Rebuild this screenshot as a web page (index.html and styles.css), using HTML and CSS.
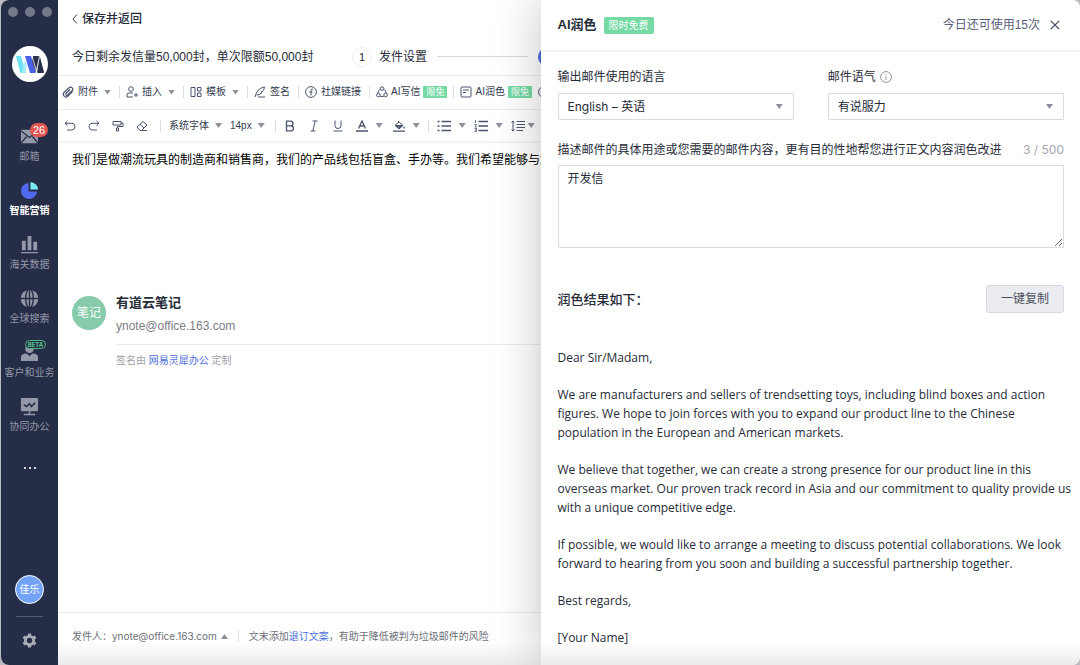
FILE: index.html
```html
<!DOCTYPE html>
<html lang="zh-CN">
<head>
<meta charset="utf-8">
<meta name="viewport" content="width=device-width, initial-scale=1">
<title>AI润色</title>
<link rel="stylesheet" href="styles.css">
</head>
<body>
<div class="window">
  <nav class="sidebar">
    <div class="lights"><i></i><i></i><i></i></div>
    <svg class="logo" viewBox="0 0 36 36"><circle cx="18" cy="18" r="18" fill="#fff"/><path d="M4 10h5l5 17h-5q-1 0-1-1z" fill="#6fe3f3"/><path d="M13 14l2 6-2 7h-3z" fill="#a9eef8"/><path d="M13 10h6l5 17h-6z" fill="#4a62e8"/><path d="M21 10h7l-4 17-4-12z" fill="#27304d"/><path d="M28 11l4 15q0 1-1 1h-6l2-13z" fill="#27304d"/><path d="M27.500 10l-3.500 17M20 10l5 17" stroke="#fff" stroke-width=".8"/></svg>
    <ul class="nav">
      <li><a href="#"><svg viewBox="0 0 20 20"><path fill="#9498a8" d="M1 4l9 7 9-7v13H1z"/><path fill="#9498a8" d="M1 3h18v2l-9 7-9-7z"/><path d="M1 4l9 7 9-7M1 17l6-7M19 17l-6-7" fill="none" stroke="#262d47" stroke-width="1.400"/></svg><span>邮箱</span><b class="count">26</b></a></li>
      <li><a href="#" class="active"><svg viewBox="0 0 20 20"><path fill="#4f69f0" d="M9 2a8.500 8.500 0 1 0 9 9H9z"/><path fill="#7de8f5" d="M11 1a8.500 8.500 0 0 1 8 8h-8z"/></svg><span>智能营销</span></a></li>
      <li><a href="#"><svg viewBox="0 0 20 20" fill="#9498a8"><path d="M2 6h4v10H2zM8 1h4v15H8zM14 7h4v9h-4zM1 18h18v1.300H1z"/></svg><span>海关数据</span></a></li>
      <li><a href="#"><svg viewBox="0 0 20 20"><circle cx="10" cy="10" r="9.300" fill="#9498a8"/><g fill="none" stroke="#262d47" stroke-width="1.500"><ellipse cx="10" cy="10" rx="4" ry="10"/><path d="M0 10h20M10 0v20"/></g></svg><span>全球搜索</span></a></li>
      <li><a href="#"><svg viewBox="0 0 20 20" fill="#9498a8"><circle cx="10" cy="6" r="4.500"/><path d="M1 19v-4q0-4 6-4l3 3 3-3q6 0 6 4v4z"/></svg><span>客户和业务</span><b class="beta">BETA</b></a></li>
      <li><a href="#"><svg viewBox="0 0 20 20"><rect x="1" y="1" width="18" height="14" rx="1" fill="#9498a8"/><path d="M10 15v3M4 18.500h12" stroke="#9498a8" stroke-width="1.500"/><path d="M4 8l3 2 3-3 2 3 4-4" fill="none" stroke="#262d47" stroke-width="1.600"/></svg><span>协同办公</span></a></li>
    </ul>
    <button class="dots" aria-label="更多"><i></i><i></i><i></i></button>
    <div class="side-foot">
      <div class="me">佳乐</div>
      <hr>
      <button class="gear" aria-label="设置"><svg viewBox="0 0 16 16"><circle cx="8" cy="8" r="4.400" fill="none" stroke="#a9acb8" stroke-width="3"/><path d="M8 .5v3M8 12.500v3M1.500 4.200l2.600 1.500M11.900 10.300l2.600 1.500M1.500 11.800l2.600-1.500M11.900 5.700l2.600-1.500" stroke="#a9acb8" stroke-width="3.400"/></svg></button>
    </div>
  </nav>

  <main class="main">
    <header class="top">
      <button class="back"><svg viewBox="0 0 6 10"><path d="M5 .5L1 5l4 4.500" fill="none" stroke="#333b50"/></svg>保存并返回</button>
    </header>
    <div class="steps">
      <p class="quota">今日剩余发信量50,000封，单次限额50,000封</p>
      <span class="num">1</span><span class="step-name">发件设置</span><i class="line"></i><span class="num current">2</span>
    </div>
    <div class="bar">
      <button><svg viewBox="0 0 12 12"><path d="M10.500 5.500L6 10Q4 12 2.200 10.200T2 6.500L7 1.800q1.800-1.400 3.200 0t0 3L5.600 9Q4.600 9.800 4 9t.200-1.800L8 3.500" stroke-width="1.200"/></svg>附件<i class="tri"></i></button><i class="sep"></i>
      <button><svg viewBox="0 0 12 12"><circle cx="5" cy="3" r="2.300"/><path d="M7 11H1V9q0-2 2-2h4M10 7v4M8 9h4"/></svg>插入<i class="tri"></i></button><i class="sep"></i>
      <button><svg viewBox="0 0 12 12"><path d="M1 1.500h4v9H1zM7.500 1.500H11v3.500H7.500zM7.500 7H11v3.500H7.500z"/></svg>模板<i class="tri"></i></button><i class="sep"></i>
      <button><svg viewBox="0 0 12 12"><path d="M1 11Q3 2 10.500 1q-.5 3-2 4.500L7 6l1 .5Q6 9 2.500 9M4 11h7"/></svg>签名</button><i class="sep"></i>
      <button><svg viewBox="0 0 12 12"><circle cx="6" cy="6" r="5.400"/><path d="M8 3.200q-2-.7-2 1.300V9.500M4.300 6h3.200"/></svg>社媒链接</button><i class="sep"></i>
      <button class="ai"><svg viewBox="0 0 12 12"><circle cx="6" cy="2.600" r="1.800"/><circle cx="2.400" cy="9" r="1.800"/><circle cx="9.600" cy="9" r="1.800"/><path d="M4.200 3.200Q1.800 4.800 1.800 7.200M7.800 3.200q2.400 1.600 2.400 4M4 10.200q2 1 4 0"/></svg>AI写信<em>限免</em></button><i class="sep"></i>
      <button class="ai"><svg viewBox="0 0 12 12"><rect x="1" y="1" width="10" height="10" rx="1"/><path d="M3 4h6M3 6.500h3"/></svg>AI润色<em>限免</em></button>
      <button aria-label="更多"><svg viewBox="0 0 12 12"><circle cx="6" cy="6" r="5.400"/></svg></button>
    </div>
    <div class="bar format">
      <div class="group wide">
        <button aria-label="撤销"><svg viewBox="0 0 12 12"><path d="M3.500 1L1 3.300l2.500 2.300M1 3.300h7q3 .2 3 3.300T8 10H3"/></svg></button>
        <button aria-label="重做"><svg viewBox="0 0 12 12"><path d="M8.500 1L11 3.300 8.500 5.600M11 3.300H4Q1 3.500 1 6.600T4 10h5"/></svg></button>
        <button aria-label="格式刷"><svg viewBox="0 0 12 12"><path d="M1 1.500h8V5H1zM9 3h2v3.500H5.500V8M4.500 8h2v3h-2z"/></svg></button>
        <button aria-label="清除格式"><svg viewBox="0 0 12 12"><path d="M1 7l6-5.500L11 5 5.500 10.500H4zM4 4.300l4 3.700M4 10.500h7"/></svg></button>
      </div><i class="sep"></i>
      <div class="group text"><button>系统字体<i class="tri"></i></button><button>14px<i class="tri"></i></button></div><i class="sep"></i>
      <div class="group wide">
        <button aria-label="加粗"><svg viewBox="0 0 12 12"><path d="M2.500 1.200H6.500q2.500 0 2.500 2.300T6.500 5.800h-4zM2.500 5.800H7q2.500 0 2.500 2.500T7 10.800H2.500z" stroke-width="1.300"/></svg></button>
        <button aria-label="斜体"><svg viewBox="0 0 12 12"><path d="M4.500 1h5M2.500 11h5M7.200 1L4.800 11"/></svg></button>
        <button aria-label="下划线"><svg viewBox="0 0 12 12"><path d="M3 .5v5q0 3 3 3t3-3v-5M1.500 11h9"/></svg></button>
        <button aria-label="文字颜色"><svg viewBox="0 0 12 12"><path d="M2.500 8.500L6 1l3.500 7.500M3.700 6h4.600M0 11h12" stroke-width="1.300"/></svg><i class="tri"></i></button>
        <button aria-label="背景颜色"><svg viewBox="0 0 12 12"><path d="M5 1l5 4.500-4 3.500L2 5.500 6 2"/><path d="M2.500 5.500h7L6 8.600z" fill="#59617a"/><path d="M11 6.500v2M0 11.200h12" stroke-width="1.300"/></svg><i class="tri"></i></button>
      </div><i class="sep"></i>
      <div class="group">
        <button aria-label="无序列表"><svg class="w14" viewBox="0 0 14 12"><path d="M4.500 1.500H14M4.500 6H14M4.500 10.500H14M.5 1.500h2M.5 6h2M.5 10.500h2" stroke-width="1.400"/></svg><i class="tri"></i></button>
        <button aria-label="有序列表"><svg class="w14" viewBox="0 0 14 12"><path d="M4.500 1.500H14M4.500 6H14M4.500 10.500H14" stroke-width="1.400"/><path d="M1.500 0v3M.5 4.500h2L1 7h2M.5 8.500h2v3h-2M1 10h1.500" stroke-width=".8"/></svg><i class="tri"></i></button>
        <button class="tight" aria-label="行高"><svg class="w14" viewBox="0 0 14 12"><path d="M2 1v10M.5 2.500L2 1l1.500 1.500M.5 9.500L2 11l1.500-1.500M5.500 1.500H14M5.500 4.500H14M5.500 7.500H14M5.500 10.500H12"/></svg><i class="tri"></i></button>
      </div>
    </div>
    <article class="mail">
      <p>我们是做潮流玩具的制造商和销售商，我们的产品线包括盲盒、手办等。我们希望能够与您</p>
      <section class="sign">
        <div class="avatar">笔记</div>
        <div class="sign-body">
          <h2>有道云笔记</h2>
          <p class="addr">ynote@office.163.com</p>
          <p class="made">签名由 <a href="#">网易灵犀办公</a> 定制</p>
        </div>
      </section>
    </article>
    <footer class="foot"><span>发件人：</span><button>ynote@office.163.com<i class="tri up"></i></button><i class="sep"></i><span>文末添加<a href="#">退订文案</a>，有助于降低被判为垃圾邮件的风险</span></footer>
  </main>

  <aside class="drawer">
    <header class="drawer-head">
      <h1>AI润色</h1><span class="free">限时免费</span>
      <span class="left">今日还可使用15次</span>
      <button class="close" aria-label="关闭"><svg viewBox="0 0 10 10"><path d="M.8.8l8.400 8.400M9.200.8L.8 9.200" stroke="#3c4664" stroke-width="1.200"/></svg></button>
    </header>
    <form class="form">
      <div class="pair">
        <div class="field"><label for="lang">输出邮件使用的语言</label><div class="pick"><select id="lang"><option>English – 英语</option></select><i class="tri"></i></div></div>
        <div class="field"><label for="tone">邮件语气 <svg class="info" viewBox="0 0 12 12"><circle cx="6" cy="6" r="5.400"/><path d="M6 5.200V9M6 3v1"/></svg></label><div class="pick"><select id="tone"><option>有说服力</option></select><i class="tri"></i></div></div>
      </div>
      <div class="desc"><label for="use">描述邮件的具体用途或您需要的邮件内容，更有目的性地帮您进行正文内容润色改进</label><span>3 / 500</span></div>
      <textarea id="use">开发信</textarea>
      <div class="result"><h2>润色结果如下：</h2><button type="button" class="copy">一键复制</button></div>
      <div class="letter">
        <p>Dear Sir/Madam,</p>
        <p>We are manufacturers and sellers of trendsetting toys, including blind boxes and action figures. We hope to join forces with you to expand our product line to the Chinese population in the European and American markets.</p>
        <p>We believe that together, we can create a strong presence for our product line in this overseas market. Our proven track record in Asia and our commitment to quality provide us with a unique competitive edge.</p>
        <p>If possible, we would like to arrange a meeting to discuss potential collaborations. We look forward to hearing from you soon and building a successful partnership together.</p>
        <p>Best regards,</p>
        <p>[Your Name]</p>
      </div>
    </form>
  </aside>
</div>
</body>
</html>
```

FILE: styles.css
```css
* { box-sizing: border-box; }
body { margin: 0; background: #b9bbc0; font-family: "Liberation Sans", "Noto Sans CJK SC", sans-serif; font-size: 12px; line-height: 18px; color: #262b38; }
h1, h2, p, ul { margin: 0; padding: 0; }
ul { list-style: none; }
i, em { font-style: normal; }
a { color: #4c6fe0; text-decoration: none; }
button { font: inherit; color: inherit; background: none; border: 0; padding: 0; display: flex; align-items: center; flex: none; }
svg { display: block; flex: none; }

.window { position: relative; display: flex; height: 100vh; margin-left: 1px; border-radius: 8px; overflow: hidden; background: #fff; }
.window::after { content: ""; position: absolute; left: 57px; right: 0; bottom: 0; height: 24px; background: linear-gradient(rgba(0,0,0,0), rgba(0,0,0,.08)); pointer-events: none; }

.sidebar { width: 57px; flex: none; background: #262d47; color: #9498a8; font-size: 10px; display: flex; flex-direction: column; align-items: center; }
.lights { display: flex; gap: 7px; padding-top: 7px; }
.lights i { width: 10px; height: 10px; border-radius: 50%; background: #747989; }
.logo { width: 36px; height: 36px; margin-top: 29px; }
.nav { width: 100%; margin-top: 43px; }
.nav li { height: 54px; }
.nav a { position: relative; display: flex; flex-direction: column; align-items: center; color: inherit; line-height: 14px; padding-top: 2px; gap: 4px; white-space: nowrap; }
.nav svg { width: 19px; height: 19px; }
.nav .active { color: #fff; font-weight: 700; }
.count { position: absolute; left: 29px; top: -2px; padding: 0 3px; border-radius: 7px; background: #e25550; color: #fff; font-size: 11px; font-weight: 400; line-height: 14px; }
.beta { position: absolute; left: 24px; top: -1px; width: 21px; border: 1px solid #4fb584; border-radius: 5px; background: #262d47; color: #54c58c; font-family: Inter, sans-serif; font-size: 6px; line-height: 7px; text-align: center; }
.dots { gap: 3px; margin-top: 15px; height: 8px; }
.dots i { width: 2px; height: 2px; background: #d5d7de; }
.side-foot { margin-top: auto; display: flex; flex-direction: column; align-items: center; padding-bottom: 17px; }
.me { width: 29px; height: 29px; border: 1px solid #fff; border-radius: 50%; background: #73a2f7; color: #fff; line-height: 27px; text-align: center; }
.side-foot hr { width: 27px; border: 0; border-top: 1px solid #555c70; margin: 12px 0 16px; }
.gear svg { width: 15px; height: 15px; }

.main { flex: 1; min-width: 0; display: flex; flex-direction: column; overflow: hidden; white-space: nowrap; }
.top { display: flex; align-items: center; height: 38px; padding-left: 14px; }
.back { gap: 4px; font-weight: 500; }
.back svg { width: 6px; height: 10px; }
.steps { display: flex; align-items: center; height: 38px; padding-left: 14px; border-bottom: 1px solid #ebecee; }
.quota { width: 280px; flex: none; }
.num { width: 20px; height: 20px; flex: none; border: 1px solid #eeeff2; border-radius: 50%; line-height: 18px; text-align: center; font-size: 11px; }
.num.current { background: #4c6fe0; border-color: #4c6fe0; color: #fff; }
.step-name { margin: 0 10px 0 7px; }
.line { width: 91px; height: 1px; background: #d6d9e0; margin-right: 10px; }

.bar { display: flex; align-items: center; flex: none; height: 34px; padding: 0 0 1px 4px; border-bottom: 1px solid #ebecee; font-size: 10px; color: #333b50; }
.bar > button { gap: 4px; padding-right: 8px; }
.bar > .sep + button { padding-left: 6px; }
.bar > .ai { gap: 3px; padding-right: 6px; }
.bar svg { width: 12px; height: 12px; fill: none; stroke: #4b546e; stroke-width: 1; }
.bar svg.w14 { width: 14px; }
.bar em { padding: 0 3px; border-radius: 1px; background: #74d9a3; color: #fff; font-size: 9px; line-height: 12px; }
.sep { width: 1px; height: 12px; flex: none; background: #dcdee3; }
.tri { width: 7px; height: 5px; flex: none; background: #8d919b; clip-path: polygon(0 0, 100% 0, 50% 100%); }
.up { transform: rotate(180deg); }
.bar > button .tri { margin: 0 0 0 2px; }
.format { padding: 0 0 0 6px; height: 33px; border-bottom: 2px solid #f4f4f5; }
.group { display: flex; align-items: center; gap: 8px; }
.group button { gap: 8px; }
.text button { gap: 6px; }
.group .tight { gap: 3px; }
.format .sep { margin: 0 8px 0 10px; }
.format .wide:first-child + .sep { margin-left: 12px; }
.wide { gap: 12px; }
.wide .tri { margin-right: -2px; }

.mail { flex: 1; min-height: 0; padding: 8px 0 0 14px; color: #000; }
.sign { display: flex; gap: 10px; margin-top: 123px; }
.avatar { width: 34px; height: 34px; margin-top: 4px; flex: none; border-radius: 50%; background: #86cbaa; color: #fff; line-height: 34px; text-align: center; }
.sign-body { flex: 1; color: #262b38; }
.sign h2 { font-size: 13px; line-height: 22px; margin-bottom: 3px; font-weight: 700; }
.addr { color: #7b7d84; padding-bottom: 9px; border-bottom: 1px solid #ebecee; }
.made { font-size: 10px; color: #a0a2a8; padding-top: 7px; }
.foot { display: flex; align-items: center; height: 53px; padding: 0 0 6px 14px; border-top: 1px solid #ebecee; font-family: Inter, "Noto Sans CJK SC", sans-serif; font-size: 10px; color: #6d7078; }
.foot button { gap: 4px; }
.foot .sep { margin: 0 10px; }

.drawer { position: absolute; top: 0; right: 0; bottom: 0; width: 50%; background: #fff; overflow: hidden auto; scrollbar-width: none; box-shadow: 0 0 46px rgba(0,0,0,.24); }
.drawer-head { display: flex; align-items: center; height: 52px; padding: 0 20px 0 17px; border-bottom: 2px solid #f4f4f5; }
.drawer h1 { font-size: 13px; font-weight: 600; margin-right: 7px; }
.free { background: #74d9a3; color: #fff; font-size: 10px; line-height: 17px; padding: 0 5px; border-radius: 2px; }
.left { margin-left: auto; color: #59617a; }
.close { margin-left: 10px; }
.close svg { width: 10px; height: 10px; }
.form { padding: 16px 16px 0 17px; font-family: Inter, "Noto Sans CJK SC", sans-serif; }
.pair { display: grid; grid-template-columns: 1fr 1fr; gap: 34px; }
.field label { display: flex; align-items: center; gap: 4px; }
.info { width: 12px; height: 12px; fill: none; stroke: #8d919b; }
.pick { position: relative; margin-top: 7px; }
select { appearance: none; display: block; width: 100%; height: 27px; padding: 0 9px; font: inherit; color: inherit; background: #fff; border: 1px solid #d9dbdf; border-radius: 1px; }
.pick .tri { position: absolute; right: 11px; top: 11px; pointer-events: none; }
.desc { display: flex; justify-content: space-between; margin: 21px 0 6px; white-space: nowrap; }
.desc span { color: #a3a6af; }
textarea { display: block; width: 100%; height: 83px; padding: 4px 9px; font: inherit; color: inherit; background: #fff; border: 1px solid #d9dbdf; border-radius: 1px; resize: vertical; }
.result { display: flex; align-items: center; justify-content: space-between; margin-top: 37px; }
.result h2 { font-size: 13px; font-weight: 500; }
.copy { height: 28px; padding: 0 14px; background: #ebecf1; border: 1px solid #d7d9e0; border-radius: 3px; color: #4a4f5c; }
.letter { display: flex; flex-direction: column; gap: 18px; margin: 35px -10px 0 0; font-family: "Open Sans", sans-serif; line-height: 19px; }
```
